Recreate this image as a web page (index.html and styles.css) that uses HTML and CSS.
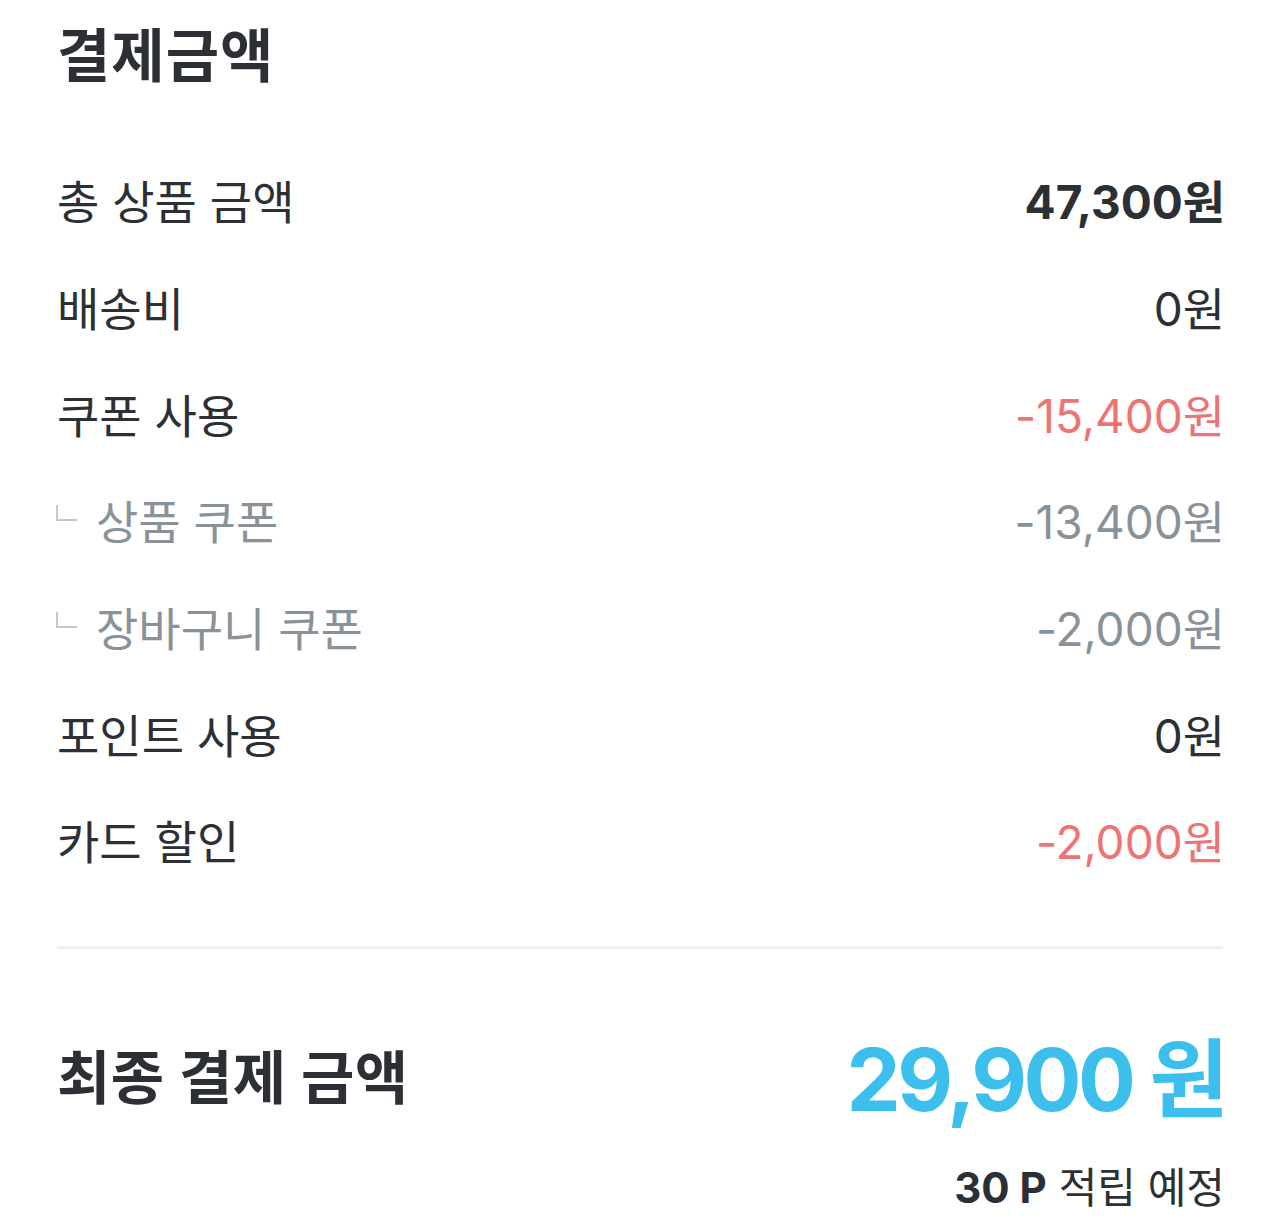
FILE: index.html
```html
<!DOCTYPE html>
<html lang="ko">
<head>
<meta charset="utf-8">
<title>결제금액</title>
<link rel="stylesheet" href="styles.css">
</head>
<body>
<main class="summary">
  <h1 class="title">결제금액</h1>
  <ul class="rows">
    <li class="row"><span class="label">총 상품 금액</span><span class="value strong">47,300원</span></li>
    <li class="row"><span class="label">배송비</span><span class="value">0원</span></li>
    <li class="row"><span class="label">쿠폰 사용</span><span class="value minus">-15,400원</span></li>
    <li class="row sub"><span class="label"><i class="mark"></i>상품 쿠폰</span><span class="value">-13,400원</span></li>
    <li class="row sub"><span class="label"><i class="mark"></i>장바구니 쿠폰</span><span class="value">-2,000원</span></li>
    <li class="row"><span class="label">포인트 사용</span><span class="value">0원</span></li>
    <li class="row"><span class="label">카드 할인</span><span class="value minus">-2,000원</span></li>
  </ul>
  <hr class="divider">
  <div class="total">
    <span class="total-label">최종 결제 금액</span>
    <span class="total-value">29,900 원</span>
  </div>
  <p class="points"><b>30 P</b> 적립 예정</p>
</main>
</body>
</html>
```

FILE: styles.css
```css
* { box-sizing: border-box; }
html, body { margin: 0; padding: 0; background: #fff; }
body {
  font-family: Inter, "Noto Sans CJK KR", sans-serif;
  color: #2c3034;
}
.summary {
  padding: 16px 57px 0 57px;
}
.title {
  margin: 0;
  font-size: 58px;
  font-weight: 700;
  line-height: 80px;
  letter-spacing: 1px;
}
.rows {
  list-style: none;
  margin: 0;
  padding: 50px 0 0;
}
.row {
  display: flex;
  justify-content: space-between;
  align-items: center;
  height: 106.7px;
  font-size: 46px;
}
.label { display: flex; align-items: center; }
.value { margin-right: -2px; }
.value.strong { font-weight: 700; }
.value.minus { color: #ee7373; }
.row.sub { color: #899199; }
.mark {
  display: inline-block;
  width: 21px;
  height: 16px;
  border-left: 2px solid #c4c8cd;
  border-bottom: 2px solid #c4c8cd;
  margin: 0 19px 12px -1px;
}
.divider {
  border: 0;
  height: 3px;
  background: #eceef0;
  margin: 53px 0 0;
}
.total {
  display: flex;
  justify-content: space-between;
  align-items: center;
  margin-top: 65px;
  height: 120px;
}
.total-label {
  font-size: 58px;
  font-weight: 700;
  letter-spacing: 0.5px;
}
.total-value {
  font-size: 86px;
  font-weight: 700;
  color: #3cbfec;
  letter-spacing: -3.5px;
  margin-right: -2px;
}
.points {
  margin: 20px -2px 0 0;
  text-align: right;
  font-size: 42px;
}
.points b { font-weight: 700; }
```
